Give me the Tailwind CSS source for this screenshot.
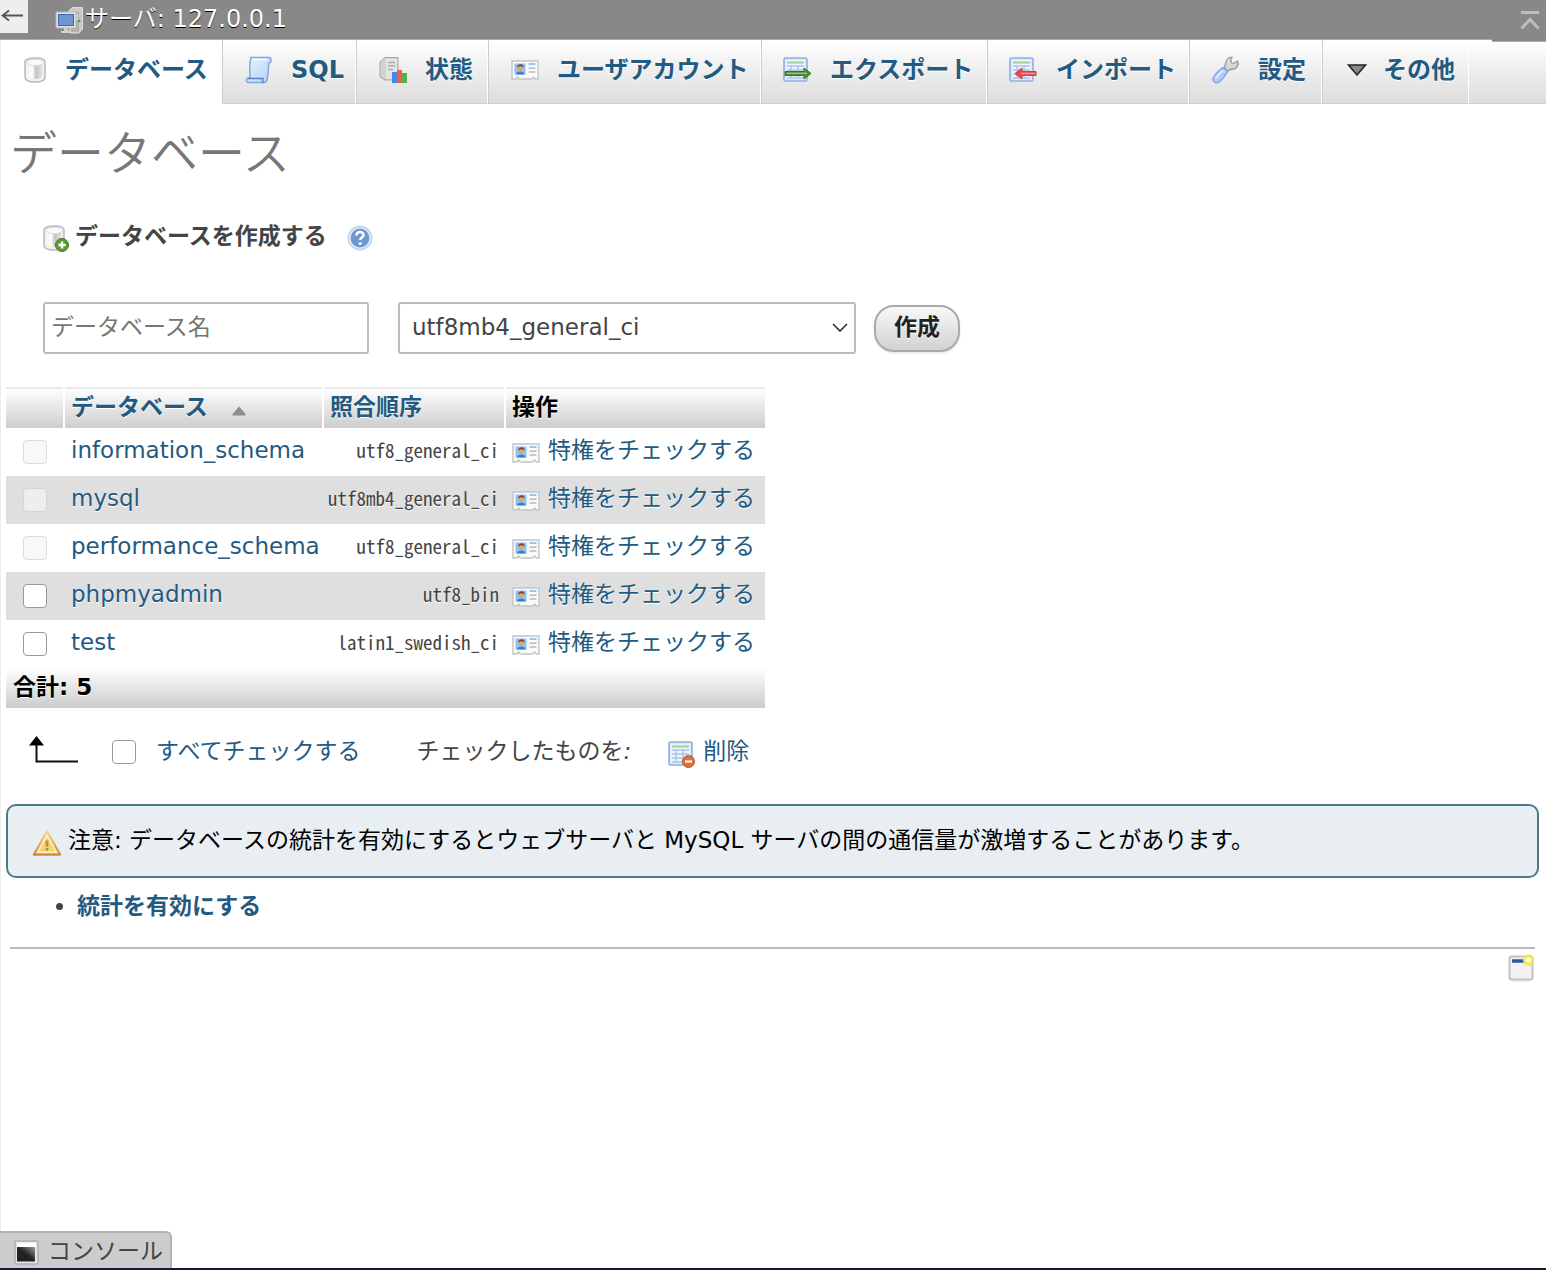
<!DOCTYPE html>
<html lang="ja">
<head>
<meta charset="utf-8">
<title>データベース - phpMyAdmin</title>
<script src="https://cdn.jsdelivr.net/npm/@tailwindcss/browser@4"></script>
</head>
<body class="flex min-h-screen flex-col bg-white font-['DejaVu_Sans','Noto_Sans_CJK_JP',sans-serif] text-[23px] leading-8 text-[#444]">

<!-- Shared icon shapes -->
<svg class="absolute h-0 w-0" aria-hidden="true">
  <defs>
    <linearGradient id="g-metal" x1="0" x2="1" y1="0" y2="0"><stop offset="0" stop-color="#f4f4f4"/><stop offset=".3" stop-color="#fff"/><stop offset=".55" stop-color="#c4c4c4"/><stop offset="1" stop-color="#e6e6e6"/></linearGradient>
    <linearGradient id="g-paper" x1="0" x2="1" y1="0" y2="1"><stop offset="0" stop-color="#e6f2fd"/><stop offset="1" stop-color="#b5d3f5"/></linearGradient>
    <linearGradient id="g-warn" x1="0" x2="0" y1="0" y2="1"><stop offset="0" stop-color="#f5d79a"/><stop offset="1" stop-color="#d18a3c"/></linearGradient>
    <linearGradient id="g-term" x1="0" x2="1" y1="1" y2="0"><stop offset=".5" stop-color="#222"/><stop offset="1" stop-color="#999"/></linearGradient>
  </defs>
  <symbol id="i-db" viewBox="0 0 28 28">
    <path d="M4 6v15c0 3 4 5 10.500 5S24 24 24 21V6c0-2.500-4-4-9.500-4S4 3.500 4 6z" fill="#f2f2f2" stroke="#b9b9b9" stroke-width="1.500"/>
    <path d="M7 8v12c2 2 4.500 3 7.500 3s5.500-1 7-3V8z" fill="url(#g-metal)"/>
    <ellipse cx="14.300" cy="6.500" rx="8" ry="3.200" fill="#fafafa" stroke="#dadada"/>
  </symbol>
  <symbol id="i-table" viewBox="0 0 28 28">
    <rect x="2" y="2" width="23" height="23" rx="1.500" fill="#dce8fa" stroke="#92aede" stroke-width="1.600"/>
    <rect x="4" y="4" width="19" height="19" fill="#eef4fd"/>
    <path d="M5 6.500h17" stroke="#a3cf92" stroke-width="2"/>
    <path d="M5 10h17M5 14h17M5 18h17M5 22h17M9 10v12M16 10v12" stroke="#a9c1ea" stroke-width="1.300"/>
  </symbol>
  <symbol id="i-user" viewBox="0 0 28 22">
    <path d="M1 2h26v18h-3l-1.500-2-2 2H8l-1.500-2L5 20H1z" fill="#fafafa" stroke="#c4c4c4" stroke-width="1.400"/>
    <rect x="3.500" y="4.500" width="11" height="11" fill="#8fc0f5"/>
    <path d="M5 15.500c0-4 8.500-4 8.500 0z" fill="#3f7fd0"/>
    <circle cx="9.300" cy="8.800" r="3" fill="#d9a577"/>
    <path d="M6 8.500c0-4.500 7-4.500 6.800 0-2-1.600-4.500-1.600-6.800 0z" fill="#6b4a2c"/>
    <path d="M17.500 5h7" stroke="#8fc0f5" stroke-width="1.800"/>
    <path d="M17.500 9.200h7M17.500 13h7" stroke="#bcbcbc" stroke-width="1.600"/>
  </symbol>
</svg>

<header class="relative flex h-[39px] items-start bg-[#888]">
  <button type="button" aria-label="ナビゲーションを隠す" class="h-[33px] w-7 bg-[#eee]">
    <svg class="h-[33px] w-7" viewBox="0 0 28 33" fill="none" stroke="#555" stroke-width="1.800"><path d="M23 15.500H3M9 10.500 2.500 15.500 9 20.500"/></svg>
  </button>
  <svg class="mt-1.5 ml-[27px] h-7 w-[30px]" viewBox="0 0 30 28">
    <path d="M13 6 17 1.500h10.500V23L24 27H15z" fill="#c9c9c9" stroke="#ddd"/>
    <path d="M16 6h8v20h-8z" fill="#b2b2b2"/><path d="M18 10h5M18 13h5" stroke="#eee" stroke-width="1.300"/>
    <circle cx="24" cy="15" r="1.600" fill="#39b54a"/>
    <rect x="1" y="6" width="20" height="16" rx="1" fill="#e2e2e2" stroke="#b5b5b5"/>
    <rect x="3.500" y="8.500" width="15" height="11" fill="#6d95d2" stroke="#3f67ad"/>
    <path d="M9 22h4v3h3v2H6v-2h3z" fill="#cfcfcf"/>
  </svg>
  <a href="#" class="mt-[3px] text-2xl leading-8 text-white [text-shadow:0_1px_0_#000]">サーバ: 127.0.0.1</a>
  <button type="button" aria-label="上へ移動" class="absolute top-0 right-0 flex h-[42px] w-[54px] items-start justify-end border-b border-[#aaa] bg-[#888]">
    <svg class="mt-2.5 mr-1.5 h-5 w-5" viewBox="0 0 20 20" fill="none" stroke="#bdbdbd" stroke-width="3"><path d="M1 2.500h18M1.500 18.500 10 9.500l8.500 9"/></svg>
  </button>
</header>

<nav class="border-t border-[#aaa]">
  <ul class="flex h-16 bg-linear-to-b from-white to-[#dcdcdc] text-2xl font-bold whitespace-nowrap text-[#235a81] [text-shadow:0_1px_0_#fff]">
    <li class="w-[222px] border-l border-[#eee] bg-white"><a href="#" class="flex h-full items-center gap-4 pb-1 pl-5"><svg class="h-7 w-7 shrink-0"><use href="#i-db"/></svg>データベース</a></li>
    <li class="w-[134px] border-x border-b border-[#ccc] border-r-white"><a href="#" class="flex h-full items-center gap-[18px] pb-1 pl-[22px]">
      <svg class="h-7 w-7 shrink-0" viewBox="0 0 28 28"><path d="M6 1.500h18c2.500 0 3 5 0 5.500-1 6-.5 12-2 17-.6 2-1.600 2.500-3 2.500H3.500c-2.500 0-3-4-.5-4.500h2C5 16 4 8 6 1.500z" fill="url(#g-paper)" stroke="#7fa8dc" stroke-width="1.500"/><path d="M3 22.500h15c-1 2 0 3.500 1 4" fill="none" stroke="#5a83c0" stroke-width="1.500"/><path d="M7 3.500h15" stroke="#fff" stroke-width="1.500"/></svg>SQL</a></li>
    <li class="w-[132px] border-x border-b border-[#ccc] border-r-white"><a href="#" class="flex h-full items-center gap-[18px] pb-1 pl-[22px]">
      <svg class="h-7 w-7 shrink-0" viewBox="0 0 28 28"><path d="M1 6 6 1.500h13V24H6l-5-3z" fill="#d2d2d2" stroke="#a6a6a6"/><path d="M7 3h11v20H7z" fill="#e4e4e4"/><path d="M9 6.500h7M9 10h7M9 13.500h5" stroke="#aaa" stroke-width="1.500"/><rect x="13" y="16" width="5" height="11" fill="#4a86e8"/><rect x="18" y="14" width="5" height="13" fill="#ee6244"/><rect x="23" y="17" width="5" height="10" fill="#57ae46"/></svg>状態</a></li>
    <li class="w-[273px] border-x border-b border-[#ccc] border-r-white"><a href="#" class="flex h-full items-center gap-[18px] pb-1 pl-[22px]"><svg class="h-[22px] w-7 shrink-0"><use href="#i-user"/></svg>ユーザアカウント</a></li>
    <li class="w-[226px] border-x border-b border-[#ccc] border-r-white"><a href="#" class="flex h-full items-center gap-[18px] pb-1 pl-5">
      <svg class="h-7 w-[30px] shrink-0" viewBox="0 0 30 28"><use href="#i-table" width="28" height="28"/><path d="M3 15.500h19V12l7 5.500-7 5.500v-3.500H3z" fill="#4f9136" stroke="#3a6e28"/><path d="M5 17.300h20" stroke="#9ccf84" stroke-width="1.200"/></svg>エクスポート</a></li>
    <li class="w-[202px] border-x border-b border-[#ccc] border-r-white"><a href="#" class="flex h-full items-center gap-[18px] pb-1 pl-5">
      <svg class="h-7 w-[30px] shrink-0" viewBox="0 0 30 28"><use href="#i-table" width="28" height="28"/><path d="M28 15.500H14V12l-7 5.500 7 5.500v-3.500h14z" fill="#e04b4b" stroke="#d23c3c"/><path d="M13 17.500h14" stroke="#f49a90" stroke-width="1.500"/></svg>インポート</a></li>
    <li class="w-[133px] border-x border-b border-[#ccc] border-r-white"><a href="#" class="flex h-full items-center gap-[18px] pb-1 pl-[22px]">
      <svg class="h-7 w-7 shrink-0" viewBox="0 0 28 28"><path d="M12 12.500c1-2 1.500-4 2-6.500.6-3 3-5 6-4.500-1 2-2 4 0 5.500 2 1.300 4-1 5.500-2 2 3-1 8-4.500 8-2 0-3.500.5-5 2z" fill="#d8d8d8" stroke="#9a9a9a" stroke-width="1.300"/><path d="M11 11.500c2 .5 4 2.500 4.500 4.500C13 20 10 24 6.500 26.500c-3 1-6-1-5.500-4.500 2-4 6-7.500 10-10.500z" fill="#b4cbf6" stroke="#7d9fe2" stroke-width="1.300"/><path d="M4 22c2-3 4.500-5.500 7-7.500" stroke="#e6eeff" stroke-width="2"/></svg>設定</a></li>
    <li class="w-[147px] border-x border-b border-[#ccc] border-r-white"><a href="#" class="flex h-full items-center gap-4 pb-1 pl-6"><svg class="h-3 w-5 shrink-0" viewBox="0 0 20 12"><path d="M1.500 1h17L10 11z" fill="#888" stroke="#222" stroke-width="1.500"/></svg>その他</a></li>
    <li class="grow border-b border-[#ccc]"></li>
  </ul>
</nav>

<main class="grow border-l border-[#eee] pr-[7px] pl-[5px]">
  <h1 class="pt-[18px] pl-1 text-[47px] leading-[64px] font-[350] text-[#777]">データベース</h1>

  <form class="mt-8 pl-[37px]">
    <h2 class="flex h-10 items-center font-bold">
      <svg class="h-7 w-7" viewBox="0 0 28 28"><use href="#i-db" x="-3" width="28" height="28"/><circle cx="19" cy="21" r="6.500" fill="#5f9a35" stroke="#44791f"/><path d="M19 17.500v7M15.500 21h7" stroke="#fff" stroke-width="2.400"/></svg>
      <span class="ml-1 pb-1">データベースを作成する</span>
      <a href="#" aria-label="ドキュメント" class="ml-5"><svg class="h-[26px] w-[26px]" viewBox="0 0 26 26"><circle cx="13" cy="13" r="12.500" fill="#c3d6f0"/><circle cx="13" cy="13" r="10" fill="#6f97cf" stroke="#e6effa" stroke-width="1.200"/><path d="M9.500 10.500c0-4.500 7-4.500 7-.5 0 2.500-3.300 2.500-3.300 5" fill="none" stroke="#fff" stroke-width="2.400"/><circle cx="13.200" cy="18.500" r="1.600" fill="#fff"/></svg></a>
    </h2>
    <div class="mt-11 flex items-center">
      <input type="text" aria-label="データベース名" placeholder="データベース名" class="h-[52px] w-[326px] rounded-[3px] border-2 border-[#bbb] px-1.5 pb-0.5 placeholder:text-[#757575]">
      <div class="relative ml-[29px]">
        <select aria-label="照合順序" class="h-[52px] w-[458px] appearance-none rounded-[3px] border-2 border-[#bbb] bg-white pb-0.5 pl-3"><option>utf8mb4_general_ci</option></select>
        <svg class="pointer-events-none absolute top-5 right-2 h-3 w-4" viewBox="0 0 16 12" fill="none" stroke="#333" stroke-width="1.600"><path d="M1 2l7 7 7-7"/></svg>
      </div>
      <button type="submit" class="ml-[18px] h-[47px] w-[86px] rounded-[20px] border-2 border-[#aaa] bg-linear-to-b from-[#f8f8f8] to-[#d2d2d2] pb-0.5 font-bold text-[#222] shadow-sm [text-shadow:0_1px_0_#fff]">作成</button>
    </div>
  </form>

  <table class="mt-[33px] w-[759px] table-fixed border-collapse text-left whitespace-nowrap [text-shadow:0_1px_0_#fff]">
    <colgroup><col class="w-[58px]"><col class="w-[259px]"><col class="w-[182px]"><col class="w-[260px]"></colgroup>
    <thead>
      <tr class="h-10 font-bold text-black">
        <th class="border-t border-[#eee] border-r-2 border-r-white bg-linear-to-b from-white to-[#ccc]"></th>
        <th class="border-t border-r-2 border-[#eee] border-r-white bg-linear-to-b from-white to-[#ccc] py-0 pb-0.5 pl-1.5"><a href="#" class="flex items-center text-[#235a81]">データベース<svg class="mt-2 ml-6 h-2.5 w-3.5" viewBox="0 0 14 10"><path d="M7 .5 13.500 8v1.500H.5V8z" fill="#8e8e8e"/></svg></a></th>
        <th class="border-t border-r-2 border-[#eee] border-r-white bg-linear-to-b from-white to-[#ccc] py-0 pb-0.5 pl-1.5"><a href="#" class="text-[#235a81]">照合順序</a></th>
        <th class="border-t border-[#eee] bg-linear-to-b from-white to-[#ccc] py-0 pb-0.5 pl-1.5">操作</th>
      </tr>
    </thead>
    <tbody>
      <tr class="h-12">
        <td class="pl-[17px]"><input type="checkbox" disabled aria-label="information_schema" class="block h-6 w-6 appearance-none rounded-sm border border-[#ddd] bg-[#f8f8f8]"></td>
        <td class="p-0 pb-1 pl-[7px]"><a href="#" class="text-[#235a81]">information_schema</a></td>
        <td class="p-0 pr-1.5 pb-1"><div class="flex justify-end font-['Noto_Sans_Mono_CJK_JP',monospace] text-[19px]">utf8_general_ci</div></td>
        <td class="p-0 pb-1 pl-[7px]"><a href="#" class="flex items-center gap-2 text-[#235a81]"><svg class="mt-1.5 h-[22px] w-7"><use href="#i-user"/></svg>特権をチェックする</a></td>
      </tr>
      <tr class="h-12 bg-[#dfdfdf]">
        <td class="pl-[17px]"><input type="checkbox" disabled aria-label="mysql" class="block h-6 w-6 appearance-none rounded-sm border border-[#d4d4d4] bg-[#eee]"></td>
        <td class="p-0 pb-1 pl-[7px]"><a href="#" class="text-[#235a81]">mysql</a></td>
        <td class="p-0 pr-1.5 pb-1"><div class="flex justify-end font-['Noto_Sans_Mono_CJK_JP',monospace] text-[19px]">utf8mb4_general_ci</div></td>
        <td class="p-0 pb-1 pl-[7px]"><a href="#" class="flex items-center gap-2 text-[#235a81]"><svg class="mt-1.5 h-[22px] w-7"><use href="#i-user"/></svg>特権をチェックする</a></td>
      </tr>
      <tr class="h-12">
        <td class="pl-[17px]"><input type="checkbox" disabled aria-label="performance_schema" class="block h-6 w-6 appearance-none rounded-sm border border-[#ddd] bg-[#f8f8f8]"></td>
        <td class="p-0 pb-1 pl-[7px]"><a href="#" class="text-[#235a81]">performance_schema</a></td>
        <td class="p-0 pr-1.5 pb-1"><div class="flex justify-end font-['Noto_Sans_Mono_CJK_JP',monospace] text-[19px]">utf8_general_ci</div></td>
        <td class="p-0 pb-1 pl-[7px]"><a href="#" class="flex items-center gap-2 text-[#235a81]"><svg class="mt-1.5 h-[22px] w-7"><use href="#i-user"/></svg>特権をチェックする</a></td>
      </tr>
      <tr class="h-12 bg-[#dfdfdf]">
        <td class="pl-[17px]"><input type="checkbox" aria-label="phpmyadmin" class="block h-6 w-6 appearance-none rounded-sm border border-[#999] bg-white"></td>
        <td class="p-0 pb-1 pl-[7px]"><a href="#" class="text-[#235a81]">phpmyadmin</a></td>
        <td class="p-0 pr-1.5 pb-1"><div class="flex justify-end font-['Noto_Sans_Mono_CJK_JP',monospace] text-[19px]">utf8_bin</div></td>
        <td class="p-0 pb-1 pl-[7px]"><a href="#" class="flex items-center gap-2 text-[#235a81]"><svg class="mt-1.5 h-[22px] w-7"><use href="#i-user"/></svg>特権をチェックする</a></td>
      </tr>
      <tr class="h-12">
        <td class="pl-[17px]"><input type="checkbox" aria-label="test" class="block h-6 w-6 appearance-none rounded-sm border border-[#999] bg-white"></td>
        <td class="p-0 pb-1 pl-[7px]"><a href="#" class="text-[#235a81]">test</a></td>
        <td class="p-0 pr-1.5 pb-1"><div class="flex justify-end font-['Noto_Sans_Mono_CJK_JP',monospace] text-[19px]">latin1_swedish_ci</div></td>
        <td class="p-0 pb-1 pl-[7px]"><a href="#" class="flex items-center gap-2 text-[#235a81]"><svg class="mt-1.5 h-[22px] w-7"><use href="#i-user"/></svg>特権をチェックする</a></td>
      </tr>
    </tbody>
    <tfoot>
      <tr class="h-10"><th colspan="4" class="bg-linear-to-b from-white to-[#ccc] p-0 pb-0.5 pl-[7px] font-bold text-black">合計: 5</th></tr>
    </tfoot>
  </table>

  <div class="mt-6 flex h-10 items-center">
    <svg class="mb-1 ml-[21px] h-[30px] w-[52px]" viewBox="0 0 52 30"><path d="M9.500 8v18.500H51" fill="none" stroke="#111" stroke-width="2"/><path d="M9.500 1 17 10.500H2z" fill="#000"/></svg>
    <input type="checkbox" id="check-all" class="ml-[33px] h-6 w-6 appearance-none rounded-sm border border-[#999] bg-white">
    <label for="check-all" class="ml-5 pb-0.5 text-[#235a81]">すべてチェックする</label>
    <span class="ml-14 pb-0.5">チェックしたものを<i>:</i></span>
    <button type="button" class="ml-9 flex items-center gap-2 text-[#235a81]">
      <svg class="mt-1 h-7 w-7" viewBox="0 0 28 28"><use href="#i-table" width="28" height="28"/><circle cx="21.500" cy="21.500" r="6" fill="#e2703a" stroke="#b9501f"/><path d="M18 21.500h7" stroke="#fff" stroke-width="2.200"/></svg>
      <span class="pb-0.5">削除</span>
    </button>
  </div>

  <div class="mt-8 flex h-[74px] items-center rounded-[10px] border-2 border-[#4f7a8c] bg-[#e8eef1] pl-6 text-black">
    <svg class="mt-1 h-7 w-[30px] shrink-0" viewBox="0 0 30 28"><path d="M15 2.500 28 25.500H2z" fill="#fff6dc" stroke="url(#g-warn)" stroke-width="2.400" stroke-linejoin="round"/><path d="M15 8 23.500 22.500h-17z" fill="#f0d56a"/><path d="M15 11.500v6M15 19v2.500" stroke="#c08a2c" stroke-width="2.600"/></svg>
    <p class="ml-1.5 pb-0.5">注意: データベースの統計を有効にするとウェブサーバと MySQL サーバの間の通信量が激増することがあります。</p>
  </div>

  <ul class="mt-3 flex list-disc pl-[71px]"><li><a href="#" class="font-bold text-[#235a81]">統計を有効にする</a></li></ul>

  <hr class="mt-[25px] mr-1 ml-1 border-t-2 border-[#bbb]">
  <a href="#" aria-label="新しいウィンドウを開く" class="mt-[5px] mr-[5px] ml-auto block w-[26px]">
    <svg class="h-[28px] w-[26px]" viewBox="0 0 26 28"><rect x="1.500" y="2.500" width="23" height="23" rx="2" fill="#f2f2f2" stroke="#c2c3bb" stroke-width="2"/><path d="M4 27.200h18" stroke="#ddd"/><path d="M4 7h14" stroke="#2f57a4" stroke-width="3.500"/><circle cx="20.500" cy="6" r="4" fill="#fff" stroke="#f3e94e" stroke-width="3"/></svg>
  </a>
</main>

<footer class="border-b-2 border-[#0f1b33]">
  <button type="button" class="flex h-[37px] w-[172px] items-center gap-2 rounded-tr-md border-t-2 border-r-2 border-[#b2b2b2] bg-[#ccc] pl-3.5">
    <svg class="mt-1 h-[26px] w-[26px]" viewBox="0 0 26 26"><rect x="1" y="1" width="23" height="23" rx="1" fill="#e6e6e6" stroke="#b0b0b0" stroke-width="1.600"/><rect x="3" y="3" width="19" height="5" fill="#fff"/><rect x="3" y="7" width="18" height="14.500" fill="url(#g-term)"/></svg>
    コンソール
  </button>
</footer>
</body>
</html>
